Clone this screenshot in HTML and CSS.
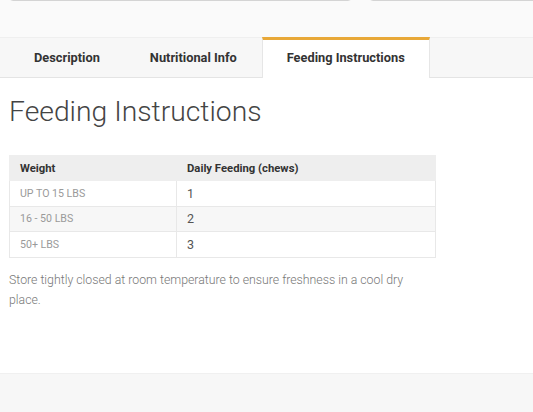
FILE: index.html
```html
<!DOCTYPE html>
<html>
<head>
<meta charset="utf-8">
<link rel="stylesheet" href="styles.css">
</head>
<body>
<div class="top">
  <div class="fields">
    <div class="field field-left"></div>
    <div class="field field-right"></div>
  </div>
</div>
<div class="tabbar">
  <div class="tabs">
    <div class="tab">Description</div>
    <div class="tab">Nutritional Info</div>
    <div class="tab active">Feeding Instructions</div>
  </div>
</div>
<div class="content">
  <h1 class="title">Feeding Instructions</h1>
  <table class="feed">
    <thead>
      <tr><th class="c1">Weight</th><th>Daily Feeding (chews)</th></tr>
    </thead>
    <tbody>
      <tr><td class="c1 w">UP TO 15 LBS</td><td class="n">1</td></tr>
      <tr class="alt"><td class="c1 w">16 - 50 LBS</td><td class="n">2</td></tr>
      <tr><td class="c1 w">50+ LBS</td><td class="n">3</td></tr>
    </tbody>
  </table>
  <p class="note">Store tightly closed at room temperature to ensure freshness in a cool dry place.</p>
</div>
<div class="footer"></div>
</body>
</html>
```
FILE: styles.css
```css
html, body {
  margin: 0;
  padding: 0;
  background: #ffffff;
  font-family: Roboto, "Liberation Sans", sans-serif;
}
.top {
  height: 37px;
  background: #fafafa;
  overflow: hidden;
}
.fields {
  display: flex;
  gap: 17px;
  padding-left: 9px;
  margin-top: -30px;
}
.field {
  height: 29px;
  border: 1px solid #d4d4d4;
  border-radius: 4px;
  background: #fff;
}
.field-left { width: 341px; }
.field-right { flex: 1; margin-right: -20px; }
.tabbar {
  background: #f7f7f7;
  border-top: 1px solid #efefef;
  border-bottom: 1px solid #e4e4e4;
  height: 39px;
}
.tabs {
  display: flex;
  padding-left: 9px;
  height: 100%;
}
.tab {
  padding: 0 25px;
  font-size: 12.8px;
  font-weight: 700;
  color: #333;
  display: flex;
  align-items: center;
  height: 39px;
  box-sizing: border-box;
}
.tab.active {
  background: #fff;
  border-top: 3px solid #e8a838;
  border-left: 1px solid #e6e6e6;
  border-right: 1px solid #e6e6e6;
  height: 41px;
  margin-top: -1px;
  padding: 0 24px 4px;
}
.content {
  padding: 0 9px;
  height: 295px;
}
.title {
  margin: 0;
  padding-top: 17px;
  font-size: 28.3px;
  font-weight: 300;
  color: #444;
  line-height: 33px;
}
.feed {
  margin-top: 27px;
  width: 427px;
  border-collapse: collapse;
  font-size: 11.3px;
}
.feed th {
  background: #eeeeee;
  text-align: left;
  font-weight: 700;
  color: #333;
  height: 24px;
  padding: 0 10px;
  border: 1px solid #eeeeee;
}
.feed td {
  height: 24.5px;
  padding: 0 10px;
  border: 1px solid #e8e8e8;
}
.feed .c1 { width: 146px; }
.feed .w {
  color: #9a9a9a;
  font-size: 10.6px;
}
.feed .n {
  color: #555;
  font-size: 12.5px;
}
.feed tr.alt td { background: #f7f7f7; }
.note {
  margin: 12px 0 0;
  width: 427px;
  font-size: 12.3px;
  font-weight: 300;
  line-height: 20px;
  color: #777;
}
.footer {
  background: #f7f7f7;
  border-top: 1px solid #f0f0f0;
  height: 38px;
}
```
